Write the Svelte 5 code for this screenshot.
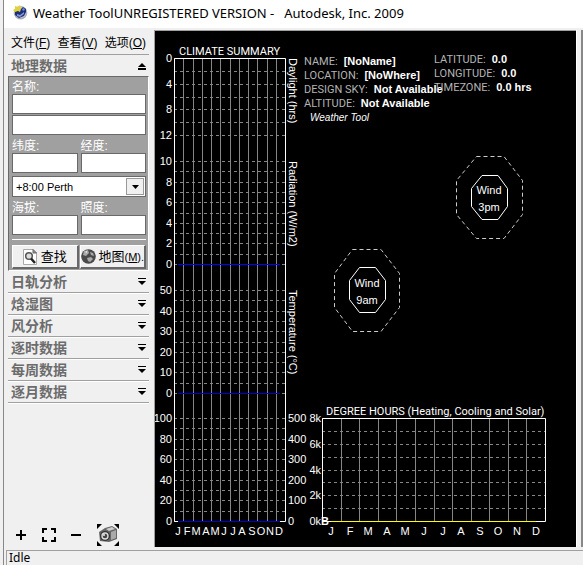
<script>
  let name = $state('');
  let place = $state('');
  let zone = $state('+8:00 Perth');

  const menus = [
    { label: '文件', key: 'F' },
    { label: '查看', key: 'V' },
    { label: '选项', key: 'O' }
  ];
  const sections = ['日轨分析', '焓湿图', '风分析', '逐时数据', '每周数据', '逐月数据'];
  const months = ['J', 'F', 'M', 'A', 'M', 'J', 'J', 'A', 'S', 'O', 'N', 'D'];
  const inner = [1, 2, 3, 4, 5, 6, 7, 8, 9, 10, 11];

  // Stacked scales of the climate chart: first and last line, number of steps, labels on every other line.
  const scales = [
    { top: 58, bottom: 135, steps: 6, labels: ['0', '4', '8', '12'] },
    { top: 161, bottom: 264, steps: 10, labels: ['10', '8', '6', '4', '2', '0'] },
    { top: 290, bottom: 393, steps: 10, labels: ['50', '40', '30', '20', '10', '0'] },
    { top: 418, bottom: 521, steps: 10, labels: ['100', '80', '60', '40', '20', '0'] }
  ];
  const lines = scales.flatMap((s) =>
    Array.from({ length: s.steps + 1 }, (_, i) => ({
      y: Math.round(s.top + ((s.bottom - s.top) * i) / s.steps),
      label: i % 2 === 0 ? s.labels[i / 2] : ''
    }))
  );
  const rain = ['500', '400', '300', '200', '100', '0'];
  const degree = ['8k', '', '6k', '', '4k', '', '2k', '', '0k'];
  const facts = [
    { x: 304, y: 65, k: 'NAME:', v: '[NoName]' },
    { x: 304, y: 79, k: 'LOCATION:', v: '[NoWhere]' },
    { x: 304, y: 93, k: 'DESIGN SKY:', v: 'Not Available' },
    { x: 304, y: 107, k: 'ALTITUDE:', v: 'Not Available' },
    { x: 434, y: 63, k: 'LATITUDE:', v: '0.0' },
    { x: 434, y: 77, k: 'LONGITUDE:', v: '0.0' },
    { x: 434, y: 91, k: 'TIMEZONE:', v: '0.0 hrs' }
  ];
  const axes = [
    { y: 58, t: 'Daylight (hrs)' },
    { y: 161, t: 'Radiation (W/m2)' },
    { y: 290, t: 'Temperature (°C)' }
  ];
  const climateX = (i) => Math.round(174 + (111 * i) / 12) + 0.5;
  const degreeX = (i) => Math.round(322 + (223 * i) / 12) + 0.5;
</script>

<div class="window">
  <header>
    <svg class="logo" viewBox="0 0 16 16" aria-hidden="true">
      <circle cx="8.5" cy="8.7" r="6.8" fill="#a9adb8" />
      <circle cx="8.5" cy="8" r="6" fill="#c5c8d0" />
      <path d="M1 6 3 5 3 2 6 3 8 1 9 4 11 6 7 7 5 9 3 8Z" fill="#e0d33a" />
      <path d="M3 8 6 7 8 8 9 5 11 3 14 5 14 8 12 12 7 14 3 11Z" fill="#1f2f72" />
      <path d="M5 10 8 11 12 8 12 10 8 13 5 12Z" fill="#7c9ae6" />
      <path d="M10 5 12 4 13 6 11 7Z" fill="#6f8be0" />
    </svg>
    <h1><span>Weather ToolUNREGISTERED VERSION -</span><span>Autodesk, Inc. 2009</span></h1>
  </header>

  <div class="body">
    <aside>
      <nav>
        {#each menus as m}
          <button class="menu">{m.label}(<u>{m.key}</u>)</button>
        {/each}
      </nav>
      <button class="section open">
        地理数据
        <svg width="8" height="8" viewBox="0 0 8 8" aria-hidden="true"><path d="M0 5 4 1 8 5ZM0 6H8V8H0Z" /></svg>
      </button>

      <form onsubmit={(e) => e.preventDefault()}>
        <label for="name">名称:</label>
        <input id="name" bind:value={name} />
        <input class="second" aria-label="地点" bind:value={place} />
        <div class="pair">
          <div><label for="lat">纬度:</label><input id="lat" /></div>
          <div><label for="lon">经度:</label><input id="lon" /></div>
        </div>
        <div class="drop">
          <select aria-label="时区" bind:value={zone}><option>+8:00 Perth</option></select>
          <span class="arrow"><svg width="7" height="4" viewBox="0 0 7 4" aria-hidden="true"><path d="M0 0H7L3.5 4Z" /></svg></span>
        </div>
        <div class="pair">
          <div><label for="alt">海拔:</label><input id="alt" /></div>
          <div><label for="lux">照度:</label><input id="lux" /></div>
        </div>
        <hr />
        <div class="pair">
          <button class="push">
            <svg width="14" height="16" viewBox="0 0 14 16" aria-hidden="true">
              <path d="M.5.5H10L13.5 4V15.5H.5Z" fill="#fff" stroke="#aaa" />
              <path d="M10 .5V4H13.5Z" fill="#999" stroke="#666" />
              <circle cx="6" cy="7" r="3.3" fill="#ddd" stroke="#555" stroke-width="1.5" />
              <path d="M8 9.500 12 14" stroke="#222" stroke-width="2.500" />
            </svg>
            <span>查找</span>
          </button>
          <button class="push map">
            <svg width="15" height="15" viewBox="0 0 15 15" aria-hidden="true">
              <circle cx="7.500" cy="7.500" r="7.300" fill="#4a4a4a" />
              <path d="M3 2 7 1 8 4 5 7 2 6ZM9 3 12 4 13 7 10 6ZM6 9 10 8 12 10 9 13 7 12Z" fill="#aaa" />
              <path d="M4 3 6 2 6 4Z" fill="#eee" />
            </svg>
            <span>地图<small>(<u>M</u>)..</small></span>
          </button>
        </div>
      </form>

      {#each sections as s}
        <button class="section">
          {s}
          <svg width="8" height="8" viewBox="0 0 8 8" aria-hidden="true"><path d="M0 0H8V1H0ZM0 3H8L4 7Z" /></svg>
        </button>
      {/each}

      <div class="tools">
        <button aria-label="放大"><svg width="10" height="10" viewBox="0 0 10 10"><path d="M5 0V10M0 5H10" stroke="#000" stroke-width="2" /></svg></button>
        <button aria-label="全屏"><svg width="14" height="14" viewBox="0 0 14 14"><path d="M1 5V1H5M9 1H13V5M13 9V13H9M5 13H1V9" fill="none" stroke="#000" stroke-width="2" /></svg></button>
        <button aria-label="缩小"><svg width="10" height="10" viewBox="0 0 10 10"><path d="M0 5H10" stroke="#000" stroke-width="2" /></svg></button>
        <button aria-label="截图">
          <svg width="22" height="22" viewBox="0 0 22 22">
            <path d="M0 0H5L0 5ZM17 0H22V5ZM0 17V22H5ZM22 17V22H17Z" />
            <path d="M2 8 8 4 15 2 20 5V15L12 18 3 17Z" fill="#666" />
            <path d="M9 5 15 3 18 5 12 7Z" fill="#ccc" />
            <path d="M14 8 19 6V14L14 16Z" fill="#aaa" />
            <circle cx="8" cy="12" r="5" fill="#333" />
            <circle cx="8" cy="12" r="3.700" fill="#ddd" />
            <circle cx="8" cy="12" r="2.300" fill="#444" />
            <circle cx="7" cy="11" r="1" fill="#eee" />
          </svg>
        </button>
      </div>
    </aside>

    <main>
      <svg class="canvas" viewBox="155 31 421 516" role="img" aria-label="Climate summary">
        <g stroke="#868686">
          {#each inner as i}
            <path d="M{climateX(i)} 59V521" />
            <path d="M{degreeX(i)} 419V521" />
          {/each}
          <g stroke-dasharray="3 3">
            {#each lines as l}<path d="M174 {l.y + 0.5}H285" />{/each}
            {#each degree as _, i}<path d="M322 {Math.round(418 + (103 * i) / 8) + 0.5}H545" />{/each}
          </g>
        </g>
        <g fill="none" stroke="#fff">
          <path d="M174.500 58.500H285.500V521.500H174.500Z" />
          <path d="M322.500 418.500H545.500V521.500H322.500Z" />
          <path d="M482 175.500H498L507.500 188.500V206.500L498 219.500H482L471.500 206.500V188.500Z" />
          <path d="M359.500 267.500H375.500L385.500 280.500V299.500L375.500 312.500H359.500L349.500 299.500V280.500Z" />
        </g>
        <g fill="none" stroke="#ccc" stroke-dasharray="4 3">
          <path d="M476.500 156.500H504L522.500 180.500V214.500L504 238.500H476.500L456.500 214.500V180.500Z" />
          <path d="M352.500 249.500H381L399.500 273.500V307.500L381 331.500H352.500L334.500 307.500V273.500Z" />
        </g>
        <path d="M178 264.500H280" stroke="#00f" />
        <path d="M178 393.500H280M178 521.500H280" stroke="#0000c8" />
        <path d="M331 521.500H536" stroke="#ff0" />

        <text class="narrow" x="179" y="55">CLIMATE SUMMARY</text>
        <text class="narrow" x="326" y="415">DEGREE HOURS (Heating, Cooling and Solar)</text>
        <g text-anchor="end">
          {#each lines as l}<text x="172" y={l.y + 4}>{l.label}</text>{/each}
          {#each degree as d, i}<text x="321" y={Math.round(422 + (103 * i) / 8)}>{d}</text>{/each}
        </g>
        {#each rain as r, i}<text x="288" y={Math.round(422 + (103 * i) / 5)}>{r}</text>{/each}
        <g text-anchor="middle">
          {#each months as m, i}
            <text x={Math.round(178 + 9.2 * i)} y="535">{m}</text>
            <text x={Math.round(331 + 18.600 * i)} y="535">{m}</text>
          {/each}
          <text x="489" y="194">Wind</text>
          <text x="489" y="211">3pm</text>
          <text x="367" y="287">Wind</text>
          <text x="367" y="304">9am</text>
        </g>
        <text class="b" x="321" y="525">B</text>
        {#each axes as a}<text transform="translate(289 {a.y}) rotate(90)">{a.t}</text>{/each}
        {#each facts as f}
          <text x={f.x} y={f.y}><tspan class="key narrow">{f.k}</tspan><tspan class="b" dx="6">{f.v}</tspan></text>
        {/each}
        <text class="tool" x="310" y="121">Weather Tool</text>
      </svg>
    </main>
    <div class="edge"></div>
  </div>
  <footer>Idle</footer>
</div>

<style>
  :global(body) { background: #f0f0f0; }
  * { box-sizing: border-box; }
  .window {
    min-height: 100vh;
    margin-left: 3px;
    border-left: 1px solid #888;
    display: flex;
    flex-direction: column;
    background: #f0f0f0;
    color: #000;
    font: 12px/16px "Liberation Sans", "Noto Sans CJK SC", sans-serif;
  }
  header {
    height: 28px;
    padding: 0 8px 4px;
    display: flex;
    align-items: center;
    gap: 5px;
    background: #fff;
  }
  .logo { width: 16px; height: 16px; flex: none; }
  h1 { margin: 0; padding-top: 2px; font: 13px/16px "Noto Sans", sans-serif; display: flex; gap: 10px; white-space: nowrap; }
  .body { flex: 1; display: flex; padding-top: 2px; }
  aside { width: 150px; flex: none; display: flex; flex-direction: column; padding: 0 5px 0 4px; }
  button { margin: 0; padding: 0; border: 0; background: none; color: inherit; font: inherit; white-space: nowrap; }
  nav { display: flex; justify-content: space-between; height: 25px; padding: 2px 3px 0; align-items: center; border-bottom: 1px solid #a0a0a0; }
  .section {
    height: 22px;
    flex: none;
    padding: 0 3px;
    display: flex;
    align-items: center;
    justify-content: space-between;
    border-bottom: 1px solid #a0a0a0;
    box-shadow: 0 1px #fff;
    color: #6c6c6c;
    font-size: 14px;
    font-weight: bold;
  }
  .section svg { fill: #000; }
  .section.open { height: 21px; border: 0; box-shadow: none; }
  form {
    display: flex;
    flex-direction: column;
    padding: 2px 2px 1px 3px;
    background: #a0a0a0;
    border: 1px solid #696969;
    border-right-color: #fff;
    border-bottom-color: #fff;
  }
  label { display: block; height: 15px; line-height: 16px; color: #fff; }
  input {
    display: block;
    width: 100%;
    height: 20px;
    padding: 0 4px;
    border: 1px solid #696969;
    background: #fff;
    font: inherit;
  }
  .second { margin-top: 1px; }
  .pair { display: grid; grid-template-columns: 1fr 1fr; gap: 3px; }
  form > .pair { margin-top: 3px; }
  .drop { position: relative; margin-top: 3px; }
  select {
    display: block;
    width: 100%;
    height: 21px;
    padding: 0 3px;
    border: 1px solid #696969;
    border-radius: 0;
    background: #fff;
    appearance: none;
    color: #000;
    font-size: 11px;
    font-family: inherit;
  }
  .arrow {
    position: absolute;
    right: 2px;
    top: 2px;
    width: 18px;
    height: 17px;
    border: 1px solid #999;
    background: #f0f0f0;
    display: grid;
    place-items: center;
    pointer-events: none;
  }
  hr { width: 100%; height: 1px; margin: 4px 0 2px; border: 0; background: #fff; }
  .pair:has(.push) { gap: 1px; }
  .push {
    height: 24px;
    min-width: 0;
    display: flex;
    align-items: center;
    justify-content: center;
    gap: 4px;
    overflow: hidden;
    background: #f0f0f0;
    border: 1px solid #fff;
    border-right: 2px solid #696969;
    border-bottom: 2px solid #696969;
    font-size: 13px;
  }
  .push svg { flex: none; }
  .map { justify-content: flex-start; gap: 3px; }
  small { font-size: 11px; }
  .tools { flex: 1; display: flex; align-items: flex-end; justify-content: space-between; padding: 0 30px 0 8px; }
  .tools button { height: 24px; display: flex; align-items: center; }
  main { flex: 1; min-width: 0; background: #000; border-top: 1px solid #a0a0a0; border-left: 1px solid #a0a0a0; }
  .canvas { display: block; width: 100%; height: auto; fill: #fff; font: 11px "Liberation Sans", sans-serif; }
  .narrow { font-family: Roboto, "Liberation Sans", sans-serif; }
  .key { fill: #b4b4b4; }
  .b { font-weight: bold; }
  .tool { font-size: 10px; font-style: italic; }
  .edge { width: 7px; border-left: 1px solid #fff; border-right: 2px solid #888; }
  footer { margin: 3px 0 0 2px; padding-left: 2px; border: 1px solid #a0a0a0; border-width: 1px 0 0 1px; font: 12px/14px "Noto Sans", sans-serif; }
</style>
